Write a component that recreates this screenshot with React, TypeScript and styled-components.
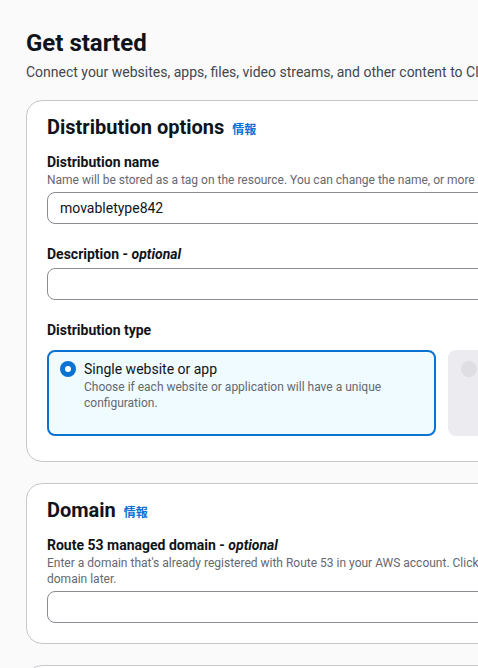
import React from "react";
import styled, { createGlobalStyle } from "styled-components";

const Global = createGlobalStyle`
  html, body { margin: 0; padding: 0; background: #fafafa; overflow: hidden; }
  body { font-family: Roboto, "Noto Sans CJK JP", sans-serif; color: #0f141a; }
  * { box-sizing: border-box; }
`;

const Page = styled.main`
  width: 880px;
  padding: 28px 0 0 26px;
  display: flex;
  flex-direction: column;
`;

const Title = styled.h1`
  margin: 0;
  font-size: 24px;
  line-height: 30px;
  font-weight: 700;
  color: #0f141a;
`;

const Subtitle = styled.p`
  margin: 4px 0 0;
  font-size: 14px;
  line-height: 20px;
  color: #424650;
  white-space: nowrap;
`;

const Stack = styled.div`
  margin-top: 18px;
  display: flex;
  flex-direction: column;
  gap: 21px;
`;

const Card = styled.section<{ $bottom?: number }>`
  background: #ffffff;
  border: 1px solid #c6c6cd;
  border-radius: 16px;
  padding: 14px 20px ${(p) => p.$bottom ?? 20}px;
  display: flex;
  flex-direction: column;
`;

const HeaderRow = styled.div`
  display: flex;
  align-items: baseline;
  gap: 8px;
  margin-bottom: 13px;
`;

const CardTitle = styled.h2`
  margin: 0;
  font-size: 20px;
  line-height: 24px;
  font-weight: 700;
`;

const Info = styled.a`
  font-family: "Noto Sans CJK JP", sans-serif;
  font-size: 12px;
  line-height: 16px;
  font-weight: 700;
  color: #0972d3;
  text-decoration: none;
`;

const Field = styled.div`
  display: flex;
  flex-direction: column;
  & + & { margin-top: 20px; }
`;

const Label = styled.label`
  font-size: 14px;
  line-height: 20px;
  font-weight: 700;
  color: #0f141a;
  em { font-style: italic; }
`;

const Hint = styled.div`
  font-size: 12px;
  line-height: 16px;
  color: #656871;
  white-space: nowrap;
`;

const Input = styled.input`
  margin-top: 4px;
  height: 32px;
  width: 100%;
  border: 1px solid #8c8c94;
  border-radius: 8px;
  background: #fff;
  padding: 0 12px;
  font-family: inherit;
  font-size: 14px;
  color: #0f141a;
  outline: none;
`;

const Tiles = styled.div`
  margin-top: 10px;
  display: grid;
  grid-template-columns: 389px 389px;
  gap: 12px;
  margin-bottom: 5px;
`;

const Tile = styled.div<{ $selected?: boolean }>`
  min-height: 86px;
  border-radius: 8px;
  border: 2px solid ${(p) => (p.$selected ? "#0972d3" : "#ebebf0")};
  background: ${(p) => (p.$selected ? "#f0fbff" : "#ebebf0")};
  padding: 7px 11px;
  display: flex;
  gap: 8px;
  align-items: flex-start;
`;

const Radio = styled.span<{ $checked?: boolean }>`
  flex: none;
  width: 16px;
  height: 16px;
  margin-top: 2px;
  border-radius: 50%;
  background: ${(p) => (p.$checked ? "#0972d3" : "#dedee3")};
  display: flex;
  align-items: center;
  justify-content: center;
  &::after {
    content: "";
    width: 6px;
    height: 6px;
    border-radius: 50%;
    background: ${(p) => (p.$checked ? "#fff" : "transparent")};
  }
`;

const TileText = styled.div`
  display: flex;
  flex-direction: column;
`;

const TileLabel = styled.div<{ $muted?: boolean }>`
  font-size: 14px;
  line-height: 20px;
  color: ${(p) => (p.$muted ? "#b4b4bb" : "#0f141a")};
`;

const TileDesc = styled.div<{ $muted?: boolean }>`
  font-size: 12px;
  line-height: 16px;
  color: ${(p) => (p.$muted ? "#b4b4bb" : "#656871")};
`;

export default function App() {
  return (
    <>
      <Global />
      <Page>
        <Title>Get started</Title>
        <Subtitle>
          Connect your websites, apps, files, video streams, and other content to CloudFront to deliver them to your users.
        </Subtitle>
        <Stack>
          <Card $bottom={20}>
            <HeaderRow>
              <CardTitle>Distribution options</CardTitle>
              <Info href="#">情報</Info>
            </HeaderRow>
            <Field>
              <Label>Distribution name</Label>
              <Hint>
                Name will be stored as a tag on the resource. You can change the name, or more tags, after you create it.
              </Hint>
              <Input defaultValue="movabletype842" />
            </Field>
            <Field>
              <Label>
                Description - <em>optional</em>
              </Label>
              <Input />
            </Field>
            <Field>
              <Label>Distribution type</Label>
              <Tiles>
                <Tile $selected>
                  <Radio $checked />
                  <TileText>
                    <TileLabel>Single website or app</TileLabel>
                    <TileDesc>
                      Choose if each website or application will have a unique configuration.
                    </TileDesc>
                  </TileText>
                </Tile>
                <Tile>
                  <Radio />
                  <TileText>
                    <TileLabel $muted>Multi-tenant architecture</TileLabel>
                    <TileDesc $muted>
                      Choose if multiple websites or applications will share a common configuration.
                    </TileDesc>
                  </TileText>
                </Tile>
              </Tiles>
            </Field>
          </Card>
          <Card>
            <HeaderRow>
              <CardTitle>Domain</CardTitle>
              <Info href="#">情報</Info>
            </HeaderRow>
            <Field>
              <Label>
                Route 53 managed domain - <em>optional</em>
              </Label>
              <Hint>
                Enter a domain that's already registered with Route 53 in your AWS account. Click Check domain to verify it, or add a
                <br />
                domain later.
              </Hint>
              <Input />
            </Field>
          </Card>
          <Card>
            <HeaderRow>
              <CardTitle>Origin</CardTitle>
            </HeaderRow>
          </Card>
        </Stack>
      </Page>
    </>
  );
}
